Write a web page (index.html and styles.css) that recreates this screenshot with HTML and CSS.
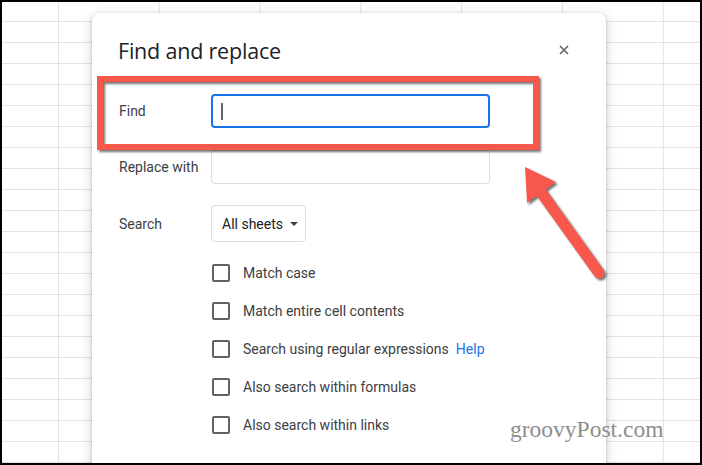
FILE: index.html
```html
<!DOCTYPE html>
<html lang="en">
    <head>
        <meta charset="UTF-8">
        <meta name="viewport" content="width=device-width, initial-scale=1.0">
        <title>Find and replace</title>
        <link rel="stylesheet" href="styles.css">
    </head>
<body>
    <div class="sheet">
        <div class="dialog">
            <div class="dialog-header">
                <h1>Find and replace</h1>
                <svg class="close" width="10" height="10" viewBox="0 0 10 10">
                    <path d="M1 1 L9 9 M9 1 L1 9" stroke="#5f6368" stroke-width="1.6" fill="none"/>
                </svg>
            </div>

            <div class="row row-find">
                <span class="label">Find</span>
                <div class="field focused"><span class="caret"></span></div>
            </div>
            <div class="row row-replace">
                <span class="label">Replace with</span>
                <div class="field"></div>
            </div>
            <div class="row row-search">
                <span class="label">Search</span>
                <div class="select">All sheets <span class="triangle"></span></div>
            </div>

            <div class="options">
                <div class="option"><span class="box"></span>Match case</div>
                <div class="option"><span class="box"></span>Match entire cell contents</div>
                <div class="option"><span class="box"></span>Search using regular expressions <a class="help" href="#">Help</a></div>
                <div class="option"><span class="box"></span>Also search within formulas</div>
                <div class="option"><span class="box"></span>Also search within links</div>
            </div>
        </div>

        <!-- annotations drawn over the screenshot -->
        <div class="highlight"></div>
        <svg class="arrow" width="702" height="465" viewBox="0 0 702 465">
            <line x1="538" y1="188" x2="599" y2="273" stroke="#f8584c" stroke-width="11" stroke-linecap="round"/>
            <polygon points="525,167 556,182 527,203" fill="#f8584c"/>
        </svg>
        <div class="watermark">groovyPost.com</div>
    </div>
</body>
</html>
```

FILE: styles.css
```css
body {
    margin: 0;
    font-family: 'Roboto', 'Liberation Sans', sans-serif;
    background-color: #fff;
}

.sheet {
    position: relative;
    width: 702px;
    height: 465px;
    box-sizing: border-box;
    border: 2px solid #000;
    overflow: hidden;
    padding: 11px 0 0 90px;
    background-color: #fff;
    background-image:
        linear-gradient(to right, #e2e2e2 1px, transparent 1px),
        linear-gradient(to bottom, #e2e2e2 1px, transparent 1px);
    background-size: 100.8px 100%, 100% 21px;
    background-position: 56px 0, 0 19px;
}

.dialog {
    width: 514px;
    height: 480px;
    box-sizing: border-box;
    padding: 24px 0 0 26px;
    background-color: #fff;
    border-radius: 8px;
    box-shadow: 0 1px 3px rgba(60, 64, 67, 0.3), 0 4px 10px 3px rgba(60, 64, 67, 0.15);
}

.dialog-header {
    display: flex;
    align-items: center;
    justify-content: space-between;
    padding-right: 37px;
}

.dialog-header h1 {
    margin: 0;
    font-family: 'Open Sans', 'Roboto', sans-serif;
    font-weight: 400;
    font-size: 21.5px;
    line-height: 28px;
    color: #202124;
    letter-spacing: -0.2px;
}

.close {
    display: block;
    margin-top: -2px;
}

.row {
    display: grid;
    grid-template-columns: 93px 279px;
    align-items: center;
}

.row-find {
    margin-top: 29px;
}

.row-replace {
    margin-top: 22px;
}

.row-search {
    margin-top: 21px;
}

.label {
    font-size: 14px;
    color: #3c4043;
    padding-left: 1px;
}

.field {
    height: 34px;
    box-sizing: border-box;
    border: 1px solid #dadce0;
    border-radius: 4px;
    display: flex;
    align-items: center;
    padding-left: 8px;
}

.field.focused {
    border: 2px solid #1a73e8;
}

.caret {
    width: 1.5px;
    height: 17px;
    background-color: #666;
}

.select {
    justify-self: start;
    height: 37px;
    box-sizing: border-box;
    display: flex;
    align-items: center;
    padding: 0 7px 0 10px;
    border: 1px solid #dadce0;
    border-radius: 4px;
    font-size: 14px;
    color: #202124;
}

.triangle {
    margin-left: 7px;
    border-left: 4px solid transparent;
    border-right: 4px solid transparent;
    border-top: 4px solid #3c4043;
}

.options {
    margin-top: 12px;
    padding-left: 94px;
}

.option {
    height: 38px;
    display: flex;
    align-items: center;
    font-size: 14px;
    color: #3c4043;
}

.box {
    width: 18px;
    height: 18px;
    box-sizing: border-box;
    border: 2px solid #5f6368;
    border-radius: 2px;
    margin-right: 13px;
}

.help {
    margin-left: 7px;
    color: #1a73e8;
    text-decoration: none;
}

.highlight {
    position: absolute;
    left: 95px;
    top: 74px;
    width: 442px;
    height: 74px;
    box-sizing: border-box;
    border: 6px solid #f8584c;
    filter: drop-shadow(2px 2px 1px rgba(0, 0, 0, 0.55));
}

.arrow {
    position: absolute;
    left: -2px;
    top: -2px;
    filter: drop-shadow(2px 2px 1px rgba(0, 0, 0, 0.55));
}

.watermark {
    position: absolute;
    left: 508px;
    top: 414px;
    font-family: 'Liberation Serif', serif;
    font-size: 23.5px;
    color: #8e8e8e;
}
```
